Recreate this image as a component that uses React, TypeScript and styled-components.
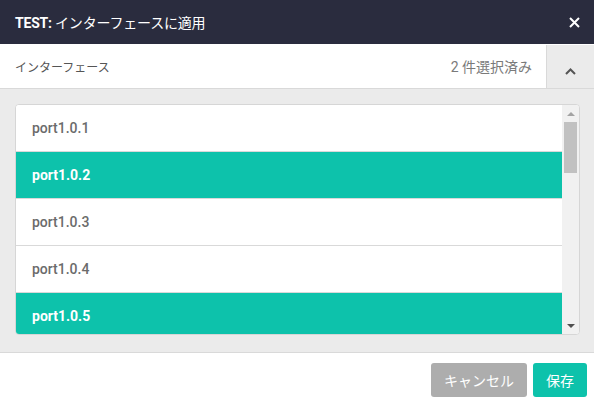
import { createGlobalStyle } from 'styled-components'
import styled from 'styled-components'

const GlobalStyle = createGlobalStyle`
  html, body {
    margin: 0;
    padding: 0;
    background: #fff;
  }
  body {
    font-family: Roboto, "Noto Sans CJK JP", sans-serif;
  }
`

const TEAL = '#0dc2ab'

const Dialog = styled.div`
  display: flex;
  flex-direction: column;
  width: 594px;
  height: 406px;
  overflow: hidden;
`

const Header = styled.header`
  display: flex;
  align-items: center;
  justify-content: space-between;
  height: 44px;
  padding: 0 14px 0 15px;
  box-sizing: border-box;
  background: #2a2c3e;
  color: #fff;
  font-size: 14px;
`

const Title = styled.h1`
  margin: 0;
  font-size: 14px;
  font-weight: 400;
  letter-spacing: -0.2px;

  b {
    font-weight: 700;
  }
`

const CloseButton = styled.button`
  display: flex;
  align-items: center;
  justify-content: center;
  width: 12px;
  height: 12px;
  padding: 0;
  border: 0;
  background: none;
  cursor: pointer;
`

const SubBar = styled.div`
  display: flex;
  align-items: stretch;
  height: 45px;
  border-bottom: 1px solid #d9d9d9;
  box-sizing: border-box;
  background: #fff;
`

const SubLabel = styled.div`
  flex: 1;
  display: flex;
  align-items: center;
  padding-left: 15px;
  font-size: 12px;
  color: #555;
`

const Count = styled.div`
  display: flex;
  align-items: center;
  padding-right: 14px;
  font-size: 14px;
  color: #7a7a7a;
`

const Collapse = styled.button`
  display: flex;
  align-items: center;
  justify-content: center;
  width: 48px;
  padding: 9px 0 0;
  margin-top: 1px;
  border: 0;
  border-left: 1px solid #d9d9d9;
  background: #ebebeb;
  cursor: pointer;
`

const Body = styled.div`
  flex: 1;
  padding: 15px 14px 16px 15px;
  background: #ebebeb;
  border-bottom: 1px solid #d9d9d9;
`

const ListBox = styled.div`
  display: flex;
  height: 231px;
  box-sizing: border-box;
  border: 1px solid #d6d6d6;
  border-radius: 4px;
  background: #fff;
  overflow: hidden;
`

const Rows = styled.ul`
  flex: 1;
  margin: 0;
  padding: 0;
  list-style: none;
  overflow: hidden;
`

const Row = styled.li<{ $selected: boolean }>`
  display: flex;
  align-items: center;
  height: 46px;
  padding-left: 16px;
  border-bottom: 1px solid #d9d9d9;
  background: ${(p) => (p.$selected ? TEAL : '#fff')};
  color: ${(p) => (p.$selected ? '#fff' : '#6b6b6b')};
  font-size: 14px;
  font-weight: ${(p) => (p.$selected ? 700 : 500)};
`

const Scrollbar = styled.div`
  display: flex;
  flex-direction: column;
  align-items: center;
  width: 17px;
  background: #f1f1f1;
`

const Arrow = styled.div<{ $dir: 'up' | 'down' }>`
  display: flex;
  align-items: center;
  justify-content: center;
  height: 17px;
  width: 100%;

  &::before {
    content: '';
    border-left: 4px solid transparent;
    border-right: 4px solid transparent;
    ${(p) =>
      p.$dir === 'up' ? 'border-bottom: 4px solid #a3a3a3;' : 'border-top: 4px solid #505050;'}
  }
`

const Track = styled.div`
  flex: 1;
  width: 100%;
  padding: 0 2px;
  box-sizing: border-box;
`

const Thumb = styled.div`
  height: 51px;
  background: #c1c1c1;
`

const Footer = styled.footer`
  display: flex;
  justify-content: flex-end;
  align-items: center;
  gap: 6px;
  height: 53px;
  padding: 0 7px 0 0;
  background: #fff;
`

const Button = styled.button<{ $primary?: boolean }>`
  height: 34px;
  padding: 0 13px;
  border: 0;
  border-radius: 3px;
  background: ${(p) => (p.$primary ? TEAL : '#adadad')};
  color: #fff;
  font-family: Roboto, "Noto Sans CJK JP", sans-serif;
  font-size: 14px;
  white-space: nowrap;
  cursor: pointer;
`

const ports = [
  { name: 'port1.0.1', selected: false },
  { name: 'port1.0.2', selected: true },
  { name: 'port1.0.3', selected: false },
  { name: 'port1.0.4', selected: false },
  { name: 'port1.0.5', selected: true },
]

export default function App() {
  const count = ports.filter((p) => p.selected).length
  return (
    <Dialog>
      <GlobalStyle />
      <Header>
        <Title>
          <b>TEST:</b> インターフェースに適用
        </Title>
        <CloseButton aria-label="close">
          <svg width="11" height="11" viewBox="0 0 11 11">
            <path d="M1 1L10 10M10 1L1 10" stroke="#fff" strokeWidth="2" />
          </svg>
        </CloseButton>
      </Header>

      <SubBar>
        <SubLabel>インターフェース</SubLabel>
        <Count>{count} 件選択済み</Count>
        <Collapse aria-label="collapse">
          <svg width="11" height="7" viewBox="0 0 11 7">
            <path d="M1 6L5.5 1.5L10 6" fill="none" stroke="#555" strokeWidth="2" />
          </svg>
        </Collapse>
      </SubBar>

      <Body>
        <ListBox>
          <Rows>
            {ports.map((p) => (
              <Row key={p.name} $selected={p.selected}>
                {p.name}
              </Row>
            ))}
          </Rows>
          <Scrollbar>
            <Arrow $dir="up" />
            <Track>
              <Thumb />
            </Track>
            <Arrow $dir="down" />
          </Scrollbar>
        </ListBox>
      </Body>

      <Footer>
        <Button>キャンセル</Button>
        <Button $primary>保存</Button>
      </Footer>
    </Dialog>
  )
}
